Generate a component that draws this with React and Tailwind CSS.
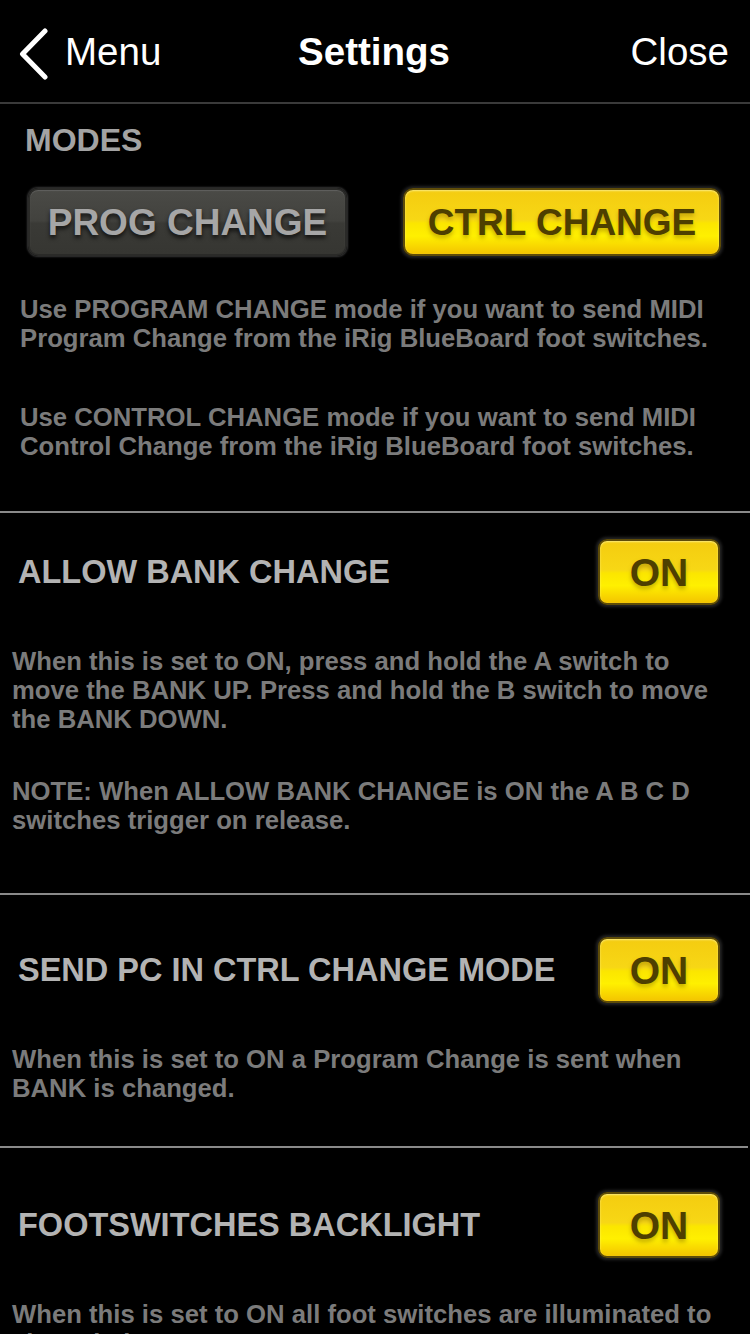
import React from "react";

const font = { fontFamily: '"Liberation Sans", Arial, sans-serif' };

function OnButton() {
  return (
    <div className="flex h-[66px] w-[122px] shrink-0 items-center justify-center rounded-[9px] border-2 border-[#5e4c08] bg-[linear-gradient(180deg,#f4cc10_0%,#f7d715_46%,#fbe600_52%,#fff000_72%,#f3c400_100%)] shadow-[0_0_3px_2px_rgba(40,40,40,0.9),inset_0_1px_2px_rgba(255,255,200,0.6)]">
      <span className="text-[39px] font-bold leading-none text-[#4e3f00] [text-shadow:0_3px_4px_rgba(150,120,0,0.55)]">
        ON
      </span>
    </div>
  );
}

function Divider({ className = "" }) {
  return <div className={"h-[2px] bg-[#8a8a8a] " + className} />;
}

function Row({ title, pt }) {
  return (
    <div className={"flex items-center justify-between pl-[18px] pr-[30px] " + pt}>
      <span className="text-[32.5px] font-bold leading-none text-[#b3b3b3]">{title}</span>
      <OnButton />
    </div>
  );
}

export default function App() {
  return (
    <div className="h-[1334px] w-[750px] overflow-hidden bg-black" style={font}>
      {/* Header */}
      <div className="grid h-[104px] grid-cols-3 items-center border-b-2 border-[#3a3a3a] pt-[3px] pl-[19px] pr-[21px] text-white">
        <div className="flex items-center gap-[16px]">
          <svg width="30" height="52" viewBox="0 0 30 52" className="mt-[2px]">
            <path d="M26 3 L3.5 26 L26 49" fill="none" stroke="white" strokeWidth="5" strokeLinecap="round" strokeLinejoin="round" />
          </svg>
          <span className="text-[38.5px] leading-none">Menu</span>
        </div>
        <div className="text-center text-[38.5px] font-bold leading-none">Settings</div>
        <div className="text-right text-[38.5px] leading-none">Close</div>
      </div>

      {/* Modes */}
      <div className="pt-[20px] pl-[25px] text-[32px] font-bold leading-none text-[#a3a3a3]">MODES</div>
      <div className="mt-[32px] flex gap-[56px] pl-[28px] pr-[29px]">
        <div className="flex h-[68px] w-[319px] items-center justify-center rounded-[10px] border-2 border-[#2a2a28] bg-[linear-gradient(180deg,#4a4a46_0%,#42423e_48%,#3a3a36_52%,#363632_100%)] shadow-[0_0_2px_1px_rgba(90,90,90,0.6),inset_0_1px_1px_rgba(120,120,120,0.5)]">
          <span className="text-[37px] font-bold leading-none text-[#a6a6a6] [text-shadow:0_3px_4px_rgba(0,0,0,0.7)]">PROG CHANGE</span>
        </div>
        <div className="flex h-[68px] w-[318px] items-center justify-center rounded-[10px] border-2 border-[#5e4c08] bg-[linear-gradient(180deg,#f4cc10_0%,#f7d715_46%,#fbe600_52%,#fff000_72%,#f3c400_100%)] shadow-[0_0_3px_2px_rgba(40,40,40,0.9),inset_0_1px_2px_rgba(255,255,200,0.6)]">
          <span className="text-[37px] font-bold leading-none text-[#4e3f00] [text-shadow:0_3px_4px_rgba(150,120,0,0.55)]">CTRL CHANGE</span>
        </div>
      </div>

      <div className="px-[20px] text-[25.7px] font-bold leading-[29px] text-[#7b7b7b]">
        <p className="mt-[39px]">
          Use PROGRAM CHANGE mode if you want to send MIDI Program Change from the iRig BlueBoard foot switches.
        </p>
        <p className="mt-[50px]">
          Use CONTROL CHANGE mode if you want to send MIDI Control Change from the iRig BlueBoard foot switches.
        </p>
      </div>

      <Divider className="mt-[50px]" />

      {/* Allow bank change */}
      <Row title="ALLOW BANK CHANGE" pt="pt-[26px]" />
      <div className="pl-[12px] pr-[12px] text-[25.7px] font-bold leading-[29px] text-[#7b7b7b]">
        <p className="mt-[42px]">
          When this is set to ON, press and hold the A switch to move the BANK UP. Press and hold the B switch to move the BANK DOWN.
        </p>
        <p className="mt-[43px]">NOTE: When ALLOW BANK CHANGE is ON the A B C D switches trigger on release.</p>
      </div>

      <Divider className="mt-[58px]" />

      {/* Send PC */}
      <Row title="SEND PC IN CTRL CHANGE MODE" pt="pt-[42px]" />
      <div className="pl-[12px] pr-[12px] text-[25.7px] font-bold leading-[29px] text-[#7b7b7b]">
        <p className="mt-[42px]">When this is set to ON a Program Change is sent when BANK is changed.</p>
      </div>

      <Divider className="mt-[43px] mr-[2px]" />

      {/* Footswitches backlight */}
      <Row title="FOOTSWITCHES BACKLIGHT" pt="pt-[44px]" />
      <div className="pl-[12px] pr-[12px] text-[25.7px] font-bold leading-[29px] text-[#7b7b7b]">
        <p className="mt-[42px]">
          When this is set to ON all foot switches are illuminated to show their status.
        </p>
      </div>
    </div>
  );
}
